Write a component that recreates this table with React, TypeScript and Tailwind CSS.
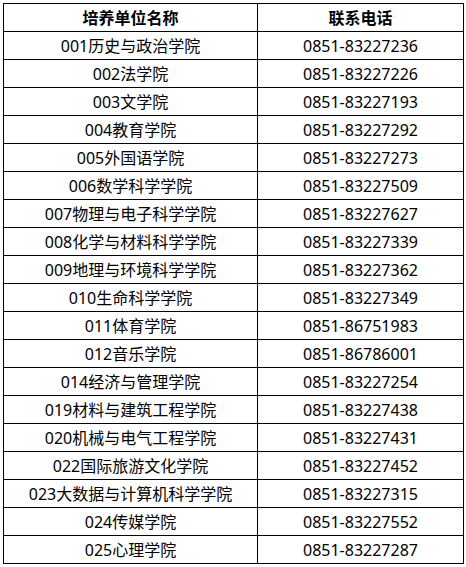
const rows: [string, string][] = [
  ['001历史与政治学院', '0851-83227236'],
  ['002法学院', '0851-83227226'],
  ['003文学院', '0851-83227193'],
  ['004教育学院', '0851-83227292'],
  ['005外国语学院', '0851-83227273'],
  ['006数学科学学院', '0851-83227509'],
  ['007物理与电子科学学院', '0851-83227627'],
  ['008化学与材料科学学院', '0851-83227339'],
  ['009地理与环境科学学院', '0851-83227362'],
  ['010生命科学学院', '0851-83227349'],
  ['011体育学院', '0851-86751983'],
  ['012音乐学院', '0851-86786001'],
  ['014经济与管理学院', '0851-83227254'],
  ['019材料与建筑工程学院', '0851-83227438'],
  ['020机械与电气工程学院', '0851-83227431'],
  ['022国际旅游文化学院', '0851-83227452'],
  ['023大数据与计算机科学学院', '0851-83227315'],
  ['024传媒学院', '0851-83227552'],
  ['025心理学院', '0851-83227287'],
];

const cell =
  'flex h-[28px] items-center justify-center border-r border-b border-black whitespace-nowrap';

export default function App() {
  return (
    <div className="min-h-screen bg-white p-[3px] font-['Noto_Sans','Noto_Sans_CJK_SC',sans-serif] text-[16px] text-black">
      <div className="grid w-[461px] grid-cols-[254px_206px] border-l border-t border-black">
        <div className={`${cell} font-bold`}>培养单位名称</div>
        <div className={`${cell} font-bold`}>联系电话</div>
        {rows.map(([name, phone]) => (
          <div key={name} className="contents">
            <div className={cell}>{name}</div>
            <div className={cell}>{phone}</div>
          </div>
        ))}
      </div>
    </div>
  );
}
